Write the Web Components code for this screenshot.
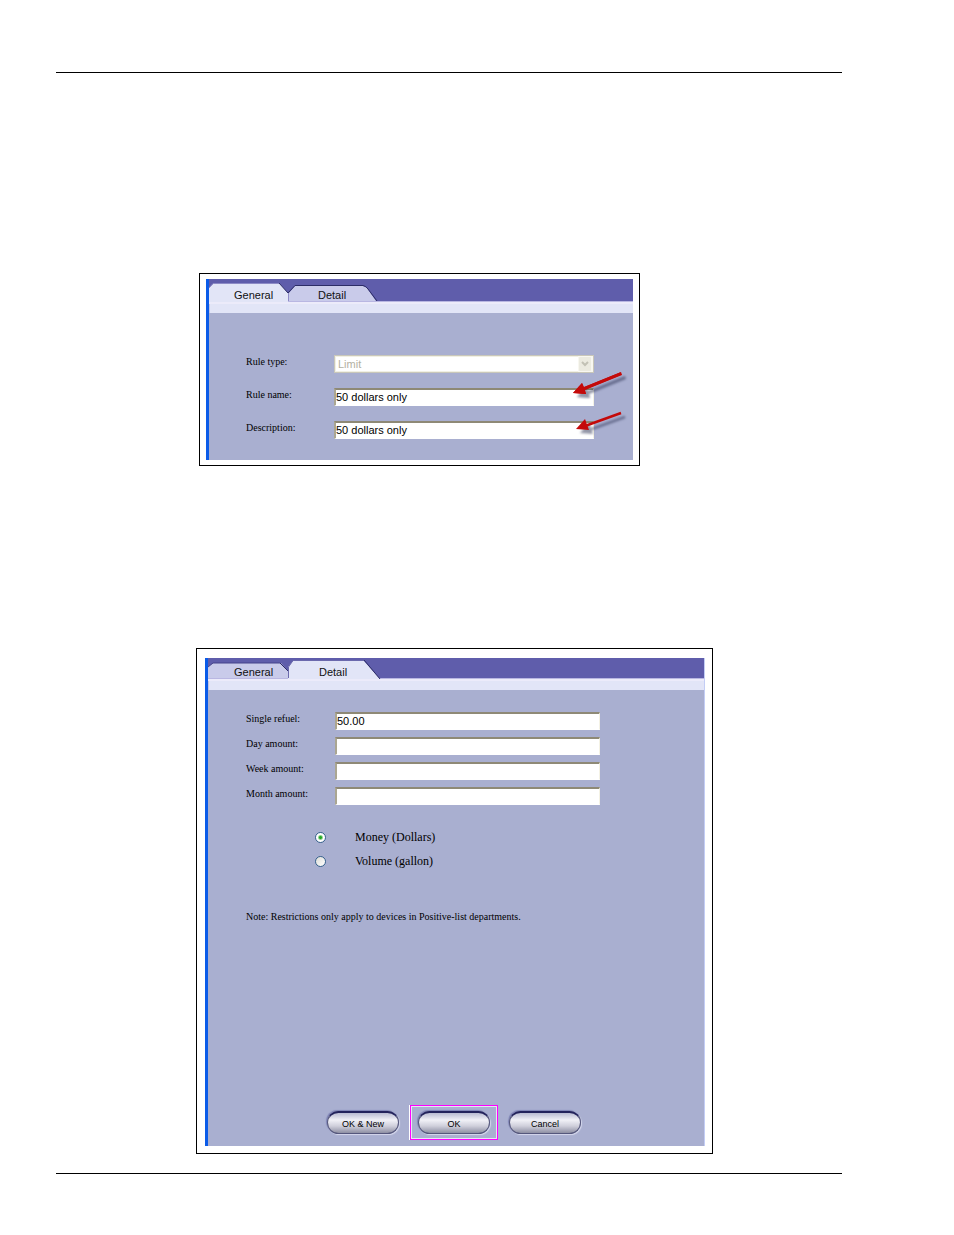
<!DOCTYPE html>
<html lang="en">
<head>
<meta charset="utf-8">
<title>Limit rule</title>
<style>
body { margin: 0; background: #fff; color: #000; font-family: "Liberation Serif", "Times New Roman", serif; }
</style>
</head>
<body>
<manual-page>
  <screen-figure style="--w: 441px; --pad: 5px 6px; --shift: 143px; --before: 200px">
    <tab-strip active="0"></tab-strip>
    <form-panel style="--top: 42px; --side: 37px; --gap: 15px; --bottom: 21px">
      <form-field kind="select" label="Rule type:" value="Limit"></form-field>
      <form-field label="Rule name:" value="50 dollars only"><red-arrow></red-arrow></form-field>
      <form-field label="Description:" value="50 dollars only"><red-arrow low></red-arrow></form-field>
    </form-panel>
  </screen-figure>
  <screen-figure style="--w: 517px; --pad: 9px 7px 7px 8px; --shift: 140px; --before: 182px; --edge: 1px">
    <tab-strip active="1"></tab-strip>
    <form-panel style="--top: 22px; --side: 38px; --gap: 7px; --min: 456px; --label: 89px; --field: 265px">
      <form-field label="Single refuel:" value="50.00"></form-field>
      <form-field label="Day amount:"></form-field>
      <form-field label="Week amount:"></form-field>
      <form-field label="Month amount:"></form-field>
      <unit-choice slot="more"></unit-choice>
      <panel-note slot="more">Note: Restrictions only apply to devices in Positive-list departments.</panel-note>
      <button-row slot="foot">
        <pill-button>OK &amp; New</pill-button>
        <pill-button marked>OK</pill-button>
        <pill-button>Cancel</pill-button>
      </button-row>
    </form-panel>
  </screen-figure>
</manual-page>

<script>
function define(name, html, setup) {
  const template = document.createElement('template');
  template.innerHTML = html;
  customElements.define(name, class extends HTMLElement {
    constructor() {
      super();
      this.attachShadow({ mode: 'open' }).append(template.content.cloneNode(true));
    }
    connectedCallback() { if (setup) setup(this, this.shadowRoot); }
  });
}

define('manual-page', `
<style>
:host { display: block; padding: 72px 112px 61px 56px; }
main { border-top: 1px solid #000; border-bottom: 1px solid #000; padding-bottom: 19px; }
</style>
<main><slot></slot></main>`);

define('screen-figure', `
<style>
:host { display: block; box-sizing: border-box; max-width: var(--w); margin: var(--before) 0 0 var(--shift); border: 1px solid #000; padding: var(--pad); background: #fff; }
section { border-left: 3px solid #0a5be8; border-right: var(--edge, 0px) solid #c3cdf5; background: #a9afd0; }
</style>
<section><slot></slot></section>`);

define('tab-strip', `
<style>
:host { display: block; background: #5f5dab; }
nav { display: flex; height: 22px; align-items: flex-end; }
:host([active="1"]) nav { height: 20px; }
button { position: relative; height: 19px; border: 0; padding: 7px 0 0 25px; margin: 0; background: none; text-align: left; font: 11px/12px "Liberation Sans", Arial, sans-serif; color: #111; }
:host([active="1"]) button { padding-left: 26px; }
button span { position: relative; display: block; }
svg { position: absolute; left: 0; bottom: -1px; overflow: visible; }
.g { width: 79px; }
.d { width: 89px; }
:host button.d { padding-left: 30px; }
:host([active="1"]) button.d { padding-left: 32px; }
.bar { height: 12px; box-sizing: border-box; background: #e2e5f7; border-top: 1px solid #b9b7e2; box-shadow: inset 0 2px #ecebfa, inset 1px 0 #c3c6e6; }
</style>
<nav role="tablist">
  <button class="g" role="tab" type="button"><svg width="80" height="20"></svg><span>General</span></button>
  <button class="d" role="tab" type="button"><svg width="92" height="22"></svg><span>Detail</span></button>
</nav>
<div class="bar"></div>`, (el, root) => {
  const first = el.getAttribute('active') === '0';
  const [g, d] = root.querySelectorAll('svg');
  root.querySelectorAll('button')[first ? 0 : 1].setAttribute('aria-selected', 'true');
  if (first) {
    g.innerHTML = '<path d="M0 20V6L4 2H71L79 11V20Z" fill="#e2e5f7"/><path d="M0 6L4 1.5H70" fill="none" stroke="#8d8bc6"/><path d="M70 1L79 11" stroke="#2c2c66" fill="none"/>';
    d.innerHTML = '<path d="M0 21V14L7 6H75L79 8L88 21Z" fill="#c9cbea"/><path d="M0.500 21V13" stroke="#8f8bc8"/><path d="M0 13L7 5.500H75Q78 6 80 9L89 21" fill="none" stroke="#2c2c66"/>';
  } else {
    g.innerHTML = '<path d="M0 19V8L5 4H73L80 12V19Z" fill="#c9cbea"/><path d="M0 8L5 4H72" fill="none" stroke="#454389"/><path d="M72 4L80 12" fill="none" stroke="#2c2c66"/>';
    d.innerHTML = '<path d="M1 22V10L6 4H77L93 22Z" fill="#e2e5f7"/><path d="M1.500 21V10L6 3.500H77" fill="none" stroke="#6b69ad"/><path d="M77 3L93 22" fill="none" stroke="#2c2c66"/>';
  }
});

define('form-panel', `
<style>
:host { display: flex; flex-direction: column; box-sizing: border-box; min-height: var(--min, 0px); padding: var(--top) 0 var(--bottom, 6px) 0; }
.fields { display: grid; gap: var(--gap); padding-left: var(--side); }
.foot { margin-top: auto; }
</style>
<div class="fields"><slot></slot></div>
<slot name="more"></slot>
<div class="foot"><slot name="foot"></slot></div>`);

define('form-field', `
<style>
:host { display: grid; grid-template-columns: var(--label, 88px) minmax(0, var(--field, 260px)); height: 18px; }
label { font: 10px/14px "Liberation Serif", "Times New Roman", serif; }
.box { position: relative; height: 18px; }
input, select { display: block; width: 100%; height: 18px; box-sizing: border-box; margin: 0; border: 1px solid; border-radius: 0; outline: 0; font: 11px/14px "Liberation Sans", Arial, sans-serif; color: #000; background: #fff; }
input { border-width: 2px 1px 1px 2px; border-color: #8e8976 #f4f2e4 #fff #aaa692; padding: 0 0 1px; }
select { appearance: none; border-color: #c9c7ba; padding: 0 3px; color: #b3b0a2; opacity: 1; box-shadow: inset 0 0 0 1px #f1f0e4; }
svg { position: absolute; right: 1px; top: 1px; }
</style>
<label for="f"></label><div class="box"></div><slot></slot>`, (el, root) => {
  const box = root.querySelector('.box');
  const value = el.getAttribute('value') || '';
  root.querySelector('label').textContent = el.getAttribute('label');
  box.innerHTML = el.getAttribute('kind') === 'select'
    ? '<select id="f" disabled><option>' + value + '</option></select><svg width="15" height="16"><path d="M0 0H15V16H0Z" fill="#f8f7f0"/><rect x="1" y="1" width="12" height="14" rx="1" fill="#ebeae0"/><path d="M4 6L7 9L10 6" fill="none" stroke="#c2c1b5" stroke-width="2"/></svg>'
    : '<input id="f" type="text" value="' + value + '">';
  box.append(root.querySelector('slot'));
});

define('red-arrow', `
<style>
:host { position: absolute; right: -31px; top: -18px; width: 54px; height: 34px; pointer-events: none; }
:host([low]) { top: -12px; }
:host([low]) .high, :host(:not([low])) .low { display: none; }
svg { display: block; overflow: visible; filter: drop-shadow(4px 4px 1px rgba(40, 45, 80, .5)); }
</style>
<svg width="54" height="34" aria-hidden="true" fill="#c40a0a">
<path class="high" d="M50 2L51 5L14 20L15 24L2 23L11 13L13 17Z"/>
<path class="high" d="M2 23L11 13L15 24Z"/>
<path class="high" d="M50 3.500L12 19" stroke="#c40a0a" stroke-width="2.500"/>
<path class="low" d="M5 20L14 10L18 21Z"/>
<path class="low" d="M50 4L14 17" stroke="#c40a0a" stroke-width="2.500"/>
</svg>`);

define('unit-choice', `
<style>
:host { display: block; margin-top: 20px; padding-left: 107px; }
div { display: flex; align-items: center; height: 24px; gap: 29px; }
input { appearance: none; width: 11px; height: 11px; margin: 0; box-sizing: border-box; border: 1px solid #37628c; border-radius: 50%; background: linear-gradient(135deg, #dcdcd6, #fff); }
input:checked { background: radial-gradient(circle, #25a925 0 1px, #fff 3px); }
label { font: 12px/16px "Liberation Serif", "Times New Roman", serif; }
</style>
<div><input type="radio" name="unit" id="money" checked><label for="money">Money (Dollars)</label></div>
<div><input type="radio" name="unit" id="volume"><label for="volume">Volume (gallon)</label></div>`);

define('panel-note', `
<style>
:host { display: block; margin-top: 37px; padding-left: 38px; font: 10px/14px "Liberation Serif", "Times New Roman", serif; }
</style><slot></slot>`);

define('button-row', `
<style>
:host { display: flex; align-items: center; gap: 11px; padding-left: 119px; }
</style><slot></slot>`);

define('pill-button', `
<style>
:host { display: block; }
:host([marked]) { border: 1px solid #f0f; padding: 5px 7px; box-shadow: inset 0 0 0 1px #e6e6f6, -1px 0 #fff; }
button { display: block; width: 72px; height: 23px; box-sizing: border-box; border: 1px solid #55577c; border-top: 2px solid #23235c; border-radius: 12px; padding: 1px 0 0; background: linear-gradient(#b9bbd2, #f1f1f7 35%, #cfcfdb 65%, #8e8fa3); box-shadow: 1px 1px 1px #d5d8ec, -1px -1px 1px #7d82b4; font: 9px/12px "Liberation Sans", Arial, sans-serif; color: #000; }
</style>
<button type="button"><slot></slot></button>`);
</script>
</body>
</html>
